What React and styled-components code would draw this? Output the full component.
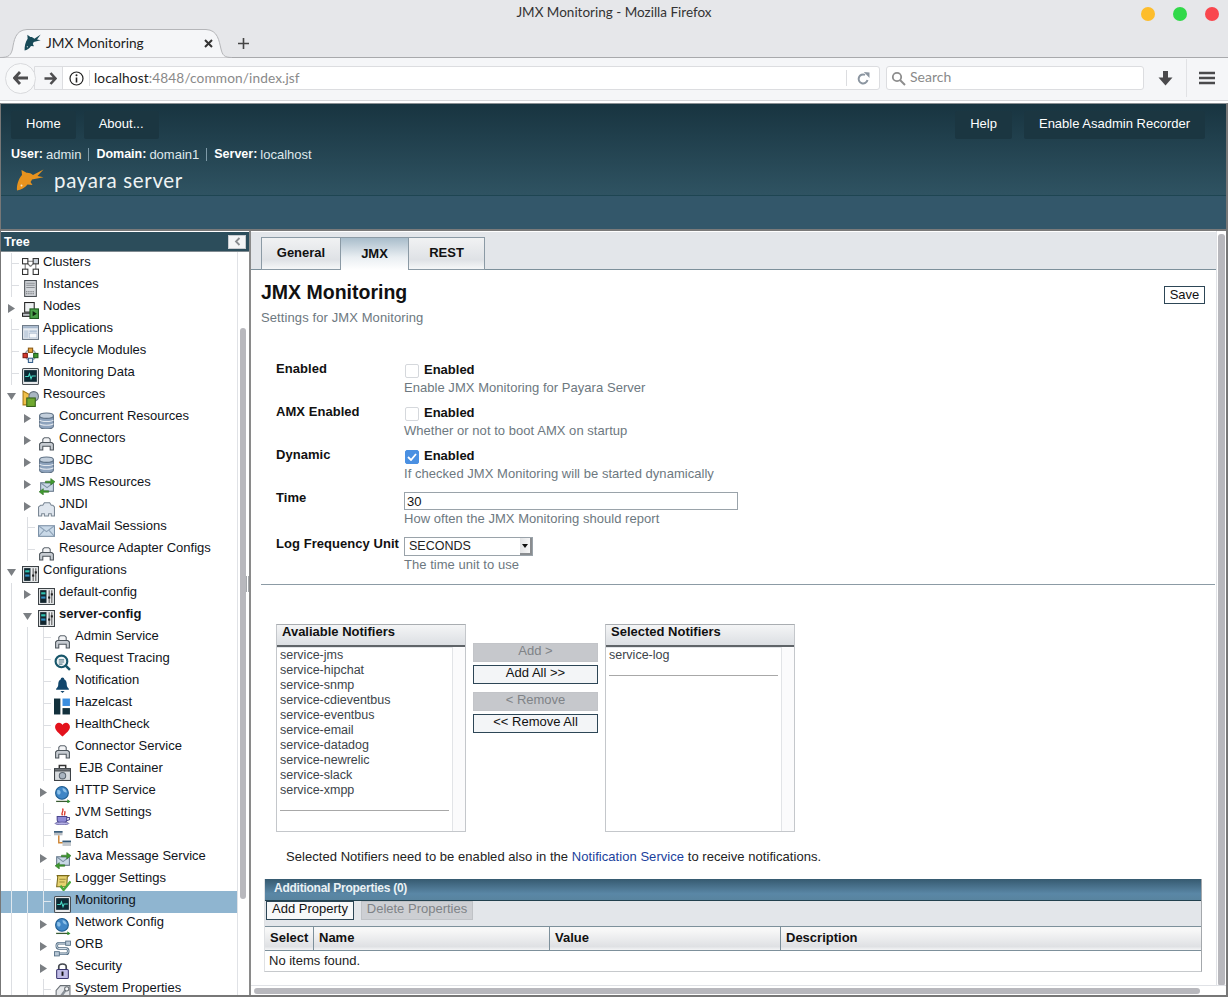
import styled, { createGlobalStyle } from 'styled-components';

const GlobalStyle = createGlobalStyle`
  html, body {
    margin: 0;
    padding: 0;
    background: #fff;
  }
  * {
    box-sizing: border-box;
  }
`;

const Page = styled.div`
  width: 1228px;
  height: 997px;
  overflow: hidden;
  display: flex;
  flex-direction: column;
  font-family: "Liberation Sans", Arial, sans-serif;
  font-size: 13px;
  color: #111;
`;

/* ---------- browser chrome ---------- */

const Browser = styled.div`
  height: 103px;
  flex: none;
  display: flex;
  flex-direction: column;
  font-family: Lato, "Noto Sans", sans-serif;
`;

const TitleBar = styled.div`
  height: 29px;
  flex: none;
  background: #e6e7ea;
  display: flex;
  align-items: center;
  justify-content: center;
  position: relative;
  padding-bottom: 5px;
  font-size: 13.5px;
  color: #333;
`;

const WindowDots = styled.div`
  position: absolute;
  right: 9px;
  top: 7px;
  display: flex;
  gap: 18px;
`;

const Dot = styled.span`
  width: 14px;
  height: 14px;
  border-radius: 50%;
  background: ${(p) => p.$color};
`;

const TabStrip = styled.div`
  height: 29px;
  flex: none;
  background: #e6e7ea;
  border-bottom: 1px solid #a8a9ac;
  display: flex;
  align-items: flex-start;
`;

const BrowserTab = styled.div`
  width: 232px;
  height: 29px;
  position: relative;
  display: flex;
  align-items: center;
  padding: 0 19px 3px 24px;
  font-size: 13.7px;
  color: #222;
`;

const TabOutline = styled.svg`
  position: absolute;
  left: 0;
  top: 0;
`;

const TabTitle = styled.span`
  position: relative;
  flex: 1;
  margin-left: 5px;
`;

const TabIcon = styled.span`
  position: relative;
  display: flex;
`;

const TabClose = styled.svg`
  position: relative;
  margin-top: 3px;
`;

const NewTab = styled.svg`
  margin: 8px 0 0 5px;
`;

const NavBar = styled.div`
  height: 43px;
  flex: none;
  background: #f5f6f8;
  border-bottom: 1px solid #d6d7da;
  display: flex;
  align-items: center;
  padding: 0 0 2px 5px;
  position: relative;
`;

const BackButton = styled.div`
  width: 31px;
  height: 31px;
  flex: none;
  border-radius: 50%;
  border: 1px solid #d9dadd;
  background: #f8f9fa;
  display: flex;
  align-items: center;
  justify-content: center;
  position: relative;
  z-index: 1;
`;

const UrlBar = styled.div`
  width: 846px;
  height: 24px;
  margin-left: -2px;
  flex: none;
  border: 1px solid #dcdde0;
  border-radius: 0 3px 3px 0;
  background: #fff;
  display: flex;
  align-items: center;
  font-size: 13.7px;
  color: #8a8a8a;
`;

const ForwardCell = styled.div`
  width: 28px;
  height: 22px;
  background: #f5f6f8;
  border-right: 1px solid #dcdde0;
  display: flex;
  align-items: center;
  justify-content: center;
  padding-left: 4px;
  flex: none;
`;

const InfoCell = styled.div`
  width: 27px;
  height: 16px;
  border-right: 1px solid #dcdde0;
  display: flex;
  align-items: center;
  justify-content: center;
  flex: none;
`;

const UrlText = styled.span`
  margin-left: 4px;
  flex: 1;
  letter-spacing: 0.1px;
  padding-bottom: 2px;
  b {
    font-weight: 400;
    color: #222;
  }
`;

const ReloadCell = styled.div`
  width: 33px;
  height: 16px;
  border-left: 1px solid #dcdde0;
  display: flex;
  align-items: center;
  justify-content: center;
  flex: none;
`;

const SearchBar = styled.div`
  width: 258px;
  height: 24px;
  margin-left: 6px;
  flex: none;
  border: 1px solid #dcdde0;
  border-radius: 3px;
  background: #fff;
  display: flex;
  align-items: center;
  gap: 4px;
  padding-left: 4px;
  font-size: 14px;
  color: #8a8a8a;
  span {
    padding-bottom: 3px;
  }
`;

const ToolCell = styled.div`
  width: ${(p) => p.$w}px;
  height: 38px;
  flex: none;
  display: flex;
  align-items: center;
  justify-content: center;
  border-left: ${(p) => (p.$divided ? '1px solid #e1e2e5' : 'none')};
`;

/* ---------- masthead ---------- */

const Masthead = styled.header`
  height: 128px;
  flex: none;
  border-top: 1px solid #8b9094;
  border-left: 1px solid #777;
  border-right: 2px solid #777;
  border-bottom: 2px solid #7a7a7a;
  background: linear-gradient(#183440 0, #2f5362 91px, #1e4552 91px, #1e4552 92px, #33576a 92px);
  display: flex;
  flex-direction: column;
  color: #fff;
`;

const MastButtons = styled.div`
  display: flex;
  padding: 7px 21px 0 10px;
  gap: 8px;
`;

const MastButton = styled.div`
  height: 28px;
  padding: 0 15px 3px;
  background: #1b3641;
  border-radius: 2px;
  display: flex;
  align-items: center;
  justify-content: center;
  font-size: 13px;
  color: #fff;
  margin-left: ${(p) => (p.$push ? 'auto' : '0')};
  margin-right: ${(p) => p.$after || 0}px;
`;

const UserLine = styled.div`
  display: flex;
  align-items: center;
  margin: 7px 0 0 10px;
  font-size: 13px;
  height: 16px;
  color: #dfe8ec;
  b {
    color: #fff;
    font-size: 12.5px;
    margin-right: 3px;
  }
`;

const UserSep = styled.span`
  width: 1px;
  height: 13px;
  background: #7e9aa8;
  margin: 0 7px;
`;

const Brand = styled.div`
  display: flex;
  align-items: center;
  margin: 5px 0 0 15px;
  height: 26px;
`;

const BrandName = styled.span`
  margin-left: 10px;
  font-family: Lato, "Noto Sans", sans-serif;
  font-size: 20.5px;
  letter-spacing: 0.65px;
  color: #eef3f4;
`;

/* ---------- work area ---------- */

const Work = styled.div`
  flex: 1;
  min-height: 0;
  display: flex;
  border-left: 1px solid #777;
  border-right: 2px solid #777;
  border-bottom: 2px solid #777;
`;

const TreePane = styled.aside`
  width: 250px;
  flex: none;
  display: flex;
  flex-direction: column;
  border-right: 2px solid #8a8a8a;
  position: relative;
`;

const TreeHead = styled.div`
  height: 20px;
  flex: none;
  margin-top: 1px;
  background: #2c4d5b;
  border-bottom: 1px solid #7f8a90;
  color: #fff;
  font-weight: 700;
  font-size: 12.5px;
  display: flex;
  align-items: center;
  justify-content: space-between;
  padding: 0 3px 0 3px;
`;

const CollapseButton = styled.div`
  width: 18px;
  height: 14px;
  background: #f4f5f6;
  border: 1px solid #c9ccd0;
  display: flex;
  align-items: center;
  justify-content: center;
`;

const TreeBody = styled.div`
  flex: 1;
  min-height: 0;
  display: flex;
  overflow: hidden;
`;

const TreeRows = styled.div`
  width: 237px;
  flex: none;
  padding-top: 1px;
  border-right: 1px solid #e0e2e6;
`;

const TreeScrollbar = styled.div`
  flex: 1;
  padding: 76px 2px 0 2px;
`;

const TreeThumb = styled.div`
  width: 6px;
  height: 571px;
  background: #b8b8bd;
  border-radius: 3px;
`;

const Row = styled.div`
  height: 22px;
  display: flex;
  padding-left: 2px;
  background: ${(p) => (p.$active ? '#8fb5d0' : 'transparent')};
  --rail: ${(p) => (p.$active ? '#dfe8ef' : '#dcdee2')};
`;

const Slot = styled.div`
  width: 16px;
  height: 22px;
  flex: none;
  position: relative;
  display: flex;
  align-items: center;
  justify-content: center;
  background-repeat: no-repeat;
  background-image: ${(p) =>
    p.$kind === 'rail'
      ? 'linear-gradient(var(--rail), var(--rail))'
      : p.$kind === 'branch'
        ? 'linear-gradient(var(--rail), var(--rail)), linear-gradient(var(--rail), var(--rail))'
        : 'none'};
  background-size: ${(p) => (p.$kind === 'branch' ? '1px 22px, 8px 1px' : '1px 22px')};
  background-position: ${(p) => (p.$kind === 'branch' ? '8px 0, 8px 10px' : '8px 0')};
`;

const IconCell = styled.div`
  width: ${(p) => (p.$wide ? 28 : 24)}px;
  flex: none;
  padding: 5px 0 0 3px;
`;

const RowLabel = styled.span`
  line-height: 18px;
  white-space: nowrap;
  font-size: 13px;
  font-weight: ${(p) => (p.$bold ? 700 : 400)};
  color: #10141a;
`;

const Splitter = styled.div`
  position: absolute;
  right: 0;
  top: 345px;
  width: 3px;
  height: 16px;
  border: 1px solid #a5a8ac;
  border-top: none;
  border-bottom: none;
`;

const Main = styled.main`
  flex: 1;
  min-width: 0;
  display: flex;
  flex-direction: column;
`;

const MainTop = styled.div`
  flex: 1;
  min-height: 0;
  display: flex;
`;

const Content = styled.div`
  flex: 1;
  min-width: 0;
  overflow: hidden;
  border-right: 1px solid #e0e2e6;
`;

const VScrollbar = styled.div`
  width: 9px;
  flex: none;
  padding: 3px 1px 0 1px;
`;

const Thumb = styled.div`
  width: 7px;
  height: 752px;
  background: #b8b8bd;
  border-radius: 3px;
`;

const HScrollbar = styled.div`
  height: 10px;
  flex: none;
  border-top: 1px solid #e0e2e6;
  padding: 2px 0 0 3px;
`;

const HThumb = styled.div`
  width: 946px;
  height: 6px;
  background: #b8b8bd;
  border-radius: 3px;
`;

const TabBar = styled.div`
  height: 38px;
  margin-top: 1px;
  padding: 5px 0 0 10px;
  background: #e3e6ea;
  border-bottom: 1px solid #7d909b;
  display: flex;
`;

const PageTab = styled.div`
  width: ${(p) => p.$w}px;
  height: 33px;
  border: 1px solid #8b9aa5;
  border-left-width: ${(p) => (p.$first ? 1 : 0)}px;
  border-bottom: ${(p) => (p.$active ? 'none' : '1px solid #8b9aa5')};
  background: ${(p) =>
    p.$active
      ? 'linear-gradient(#a9bdcb, #e9eef2 60%, #fff)'
      : 'linear-gradient(#f1f2f3, #dfe2e6 70%, #f6f7f8)'};
  display: flex;
  align-items: center;
  justify-content: center;
  font-weight: 700;
  font-size: 13px;
  padding-bottom: 2px;
  color: #111;
`;

const Heading = styled.div`
  padding: 9px 11px 0 10px;
  display: flex;
  justify-content: space-between;
  align-items: flex-start;
`;

const PageTitle = styled.h1`
  margin: 0;
  font-size: 19.5px;
  line-height: 26px;
  font-weight: 700;
  color: #111;
`;

const PageHelp = styled.p`
  margin: 5px 0 0;
  font-size: 13px;
  line-height: 16px;
  letter-spacing: 0.1px;
  color: #6d7880;
`;

const SaveButton = styled.div`
  width: 41px;
  height: 18px;
  margin-top: 7px;
  border: 1px solid #2d4656;
  background: #fff;
  font-size: 13px;
  padding-bottom: 1px;
  display: flex;
  align-items: center;
  justify-content: center;
`;

const Form = styled.div`
  margin: 35px 0 0 25px;
`;

const FormRow = styled.div`
  display: grid;
  grid-template-columns: 128px 1fr;
  height: ${(p) => p.$h || 43}px;
`;

const FieldLabel = styled.div`
  font-weight: 700;
  font-size: 13px;
  letter-spacing: 0.05px;
  line-height: 16px;
  white-space: nowrap;
`;

const FieldValue = styled.div`
  padding-top: ${(p) => p.$top || 0}px;
`;

const CheckLine = styled.div`
  display: flex;
  align-items: center;
  height: 16px;
  margin-bottom: 3px;
  font-weight: 700;
  font-size: 13px;
  padding-left: 1px;
`;

const Check = styled.span`
  width: 14px;
  height: 14px;
  flex: none;
  margin: 4px 5px 0 0;
  border-radius: 2px;
  border: 1px solid ${(p) => (p.$on ? '#4a90e2' : '#d5d8dc')};
  background: ${(p) => (p.$on ? '#4a90e2' : '#fff')};
  display: flex;
  align-items: center;
  justify-content: center;
`;

const Help = styled.div`
  font-size: 13px;
  line-height: 16px;
  letter-spacing: 0.04px;
  margin-top: 1px;
  color: #6d7880;
`;

const TextInput = styled.input`
  display: block;
  width: 334px;
  height: 18px;
  margin: 0;
  padding: 0 2px;
  border: 1px solid #9aa3aa;
  border-radius: 0;
  outline: none;
  font: 13px "Liberation Sans", Arial, sans-serif;
  color: #111;
`;

const SelectBox = styled.div`
  width: 129px;
  height: 19px;
  border: 1px solid #9aa3aa;
  display: flex;
  align-items: center;
  justify-content: space-between;
  font-size: 12.5px;
  padding-left: 4px;
  color: #222;
`;

const SelectValue = styled.span`
  padding-bottom: 2px;
`;

const SelectArrow = styled.span`
  width: 12px;
  height: 17px;
  background: linear-gradient(90deg, #e3e4e6, #f6f6f6);
  border-right: 2px solid #8a8d90;
  border-bottom: 2px solid #8a8d90;
  display: flex;
  align-items: center;
  justify-content: center;
`;

const Rule = styled.hr`
  border: none;
  height: 1px;
  background: #8c9ba5;
  margin: 4px 1px 0 10px;
`;

const Shuttle = styled.div`
  display: flex;
  align-items: flex-start;
  margin: 39px 0 0 25px;
`;

const ListBox = styled.div`
  width: 190px;
  height: 208px;
  flex: none;
  display: flex;
  flex-direction: column;
  border: 1px solid #c4c7cb;
  border-top-color: #a9adb1;
`;

const ListHead = styled.div`
  height: 22px;
  flex: none;
  padding-left: 5px;
  background: linear-gradient(#f4f5f6, #dcdfe3);
  border-bottom: 2px solid #5f6468;
  font-weight: 700;
  font-size: 13px;
  line-height: 13px;
`;

const ListBody = styled.div`
  flex: 1;
  display: flex;
  min-height: 0;
`;

const ListItems = styled.div`
  flex: 1;
  padding: 0 3px;
  border: 1px solid #e2e4e7;
  border-bottom: none;
  border-left: none;
  font-size: 12.5px;
  line-height: 15px;
  color: #3c444a;
`;

const ListEnd = styled.div`
  height: 1px;
  background: #a8a8a8;
  margin: ${(p) => p.$gap}px 0 0;
`;

const ListTrack = styled.div`
  width: 12px;
  flex: none;
  background: #fbfbfc;
`;

const ShuttleButtons = styled.div`
  width: 125px;
  margin: 19px 7px 0;
  flex: none;
`;

const MoveButton = styled.div`
  height: 19px;
  margin-top: ${(p) => p.$gap || 0}px;
  border: 1px solid ${(p) => (p.$off ? '#c2c4c8' : '#2d4656')};
  background: ${(p) => (p.$off ? '#c6c8cc' : '#f3f5f7')};
  color: ${(p) => (p.$off ? '#7f8387' : '#111')};
  font-size: 13px;
  padding-bottom: 4px;
  display: flex;
  align-items: center;
  justify-content: center;
`;

const Note = styled.div`
  margin: 17px 0 0 35px;
  line-height: 16px;
  font-size: 13px;
  letter-spacing: 0.05px;
  color: #222;
  a {
    color: #1a3f9c;
    text-decoration: none;
  }
`;

const PropsTable = styled.section`
  width: 938px;
  margin: 14px 0 0 13px;
  border-right: 1px solid #a4a8ac;
  border-bottom: 1px solid #c6c9cc;
  border-left: 1px solid #dfe1e4;
`;

const PropsTitle = styled.div`
  height: 22px;
  background: linear-gradient(#365a70, #5a87a6 70%, #58849f);
  border-bottom: 1px solid #22414f;
  color: #eaf1f5;
  font-weight: 700;
  font-size: 12px;
  line-height: 19px;
  letter-spacing: -0.25px;
  padding-left: 9px;
`;

const PropsBar = styled.div`
  height: 25px;
  background: #e3e6ea;
  display: flex;
  gap: 7px;
  padding-left: 1px;
`;

const BarButton = styled.div`
  width: ${(p) => p.$w}px;
  height: 19px;
  border: 1px solid ${(p) => (p.$off ? '#bfc2c6' : '#2d4656')};
  background: ${(p) => (p.$off ? '#cdcfd3' : '#f7f8f9')};
  color: ${(p) => (p.$off ? '#7f8387' : '#111')};
  font-size: 13px;
  padding-bottom: 5px;
  display: flex;
  align-items: center;
  justify-content: center;
`;

const HeadRow = styled.div`
  display: grid;
  grid-template-columns: 49px 236px 231px 1fr;
  height: 25px;
  border-top: 1px solid #7d909b;
  border-bottom: 1px solid #7d909b;
  background: linear-gradient(#f7f7f7 15%, #dfe1e4 85%, #f4f5f6);
`;

const HeadCell = styled.div`
  font-weight: 700;
  font-size: 13px;
  padding: 3px 0 0 5px;
  border-right: ${(p) => (p.$last ? 'none' : '1px solid #7d909b')};
`;

const EmptyRow = styled.div`
  height: 20px;
  padding-left: 4px;
  font-size: 13px;
  line-height: 20px;
  color: #222;
`;

/* ---------- drawings ---------- */

function Fish({ color, width = 28, height = 22, stretch }) {
  return (
    <svg
      width={width}
      height={height}
      viewBox="0 0 28 22"
      preserveAspectRatio={stretch ? 'none' : 'xMidYMid meet'}
    >
      <path
        fill={color}
        d="M1 21.5C0.5 16 2.5 10 6 6L5.5 1L10.5 3.8C13 3.6 15 4.5 17 6L27.5 0.5L21.5 7L27.5 8.2L16 10.5C15.5 11.5 15 12.5 14.5 13L16.5 16L11.5 15.5C9 18.5 5 21 1 21.5Z"
      />
      <circle cx="5.5" cy="16.5" r="1" fill="#fff" opacity="0.75" />
    </svg>
  );
}

const CONNECTOR = (
  <>
    <path fill="#f3f4f6" stroke="#5e666e" d="M4.5 8V5L6 3.5H10L11.5 5V8Z" />
    <path fill="#c7ccd2" stroke="#4d555c" d="M1.5 15V9.5L3 8H13L14.5 9.5V15H11.5V11.5H4.5V15Z" />
  </>
);

const GLOBE = (
  <>
    <circle cx="7.5" cy="6.5" r="6" fill="#3f86c6" stroke="#1f5d90" />
    <path d="M3 4C5 3 7 5 6 7S3 8 3 6ZM8 2C10 2 12 4 12 6C10 6 8 5 8 2Z" fill="#8cc0e8" />
    <path d="M2 14.5H14" stroke="#3a5a32" strokeWidth="1.2" />
    <path d="M12.5 12.5L15.5 14.5L12.5 16.5Z" fill="#2f8f2f" />
  </>
);

const CONFIG = (
  <>
    <rect x="0.5" y="0.5" width="15" height="15" fill="#eceef0" stroke="#3c4246" />
    <rect x="2" y="2" width="6" height="12" fill="#13262e" />
    <rect x="3" y="4" width="4" height="2" fill="#2fc2b0" />
    <rect x="3" y="8" width="4" height="2" fill="#2f8fc2" />
    <path d="M10.5 2V14M13 2V14" stroke="#555" />
    <rect x="9.5" y="8" width="2" height="2" fill="#222" />
    <rect x="12" y="5" width="2" height="2" fill="#222" />
  </>
);

const MONITOR = (
  <>
    <rect x="0.5" y="0.5" width="15" height="15" rx="1" fill="#e8eaec" stroke="#4a4f54" />
    <rect x="2" y="2" width="12" height="11" fill="#0d2a34" />
    <path d="M3 8H6L7 5.5L8.5 10L9.5 7.5H13" fill="none" stroke="#48d8c4" />
  </>
);

const DATABASE = (
  <>
    <path fill="#8ea3bd" stroke="#5f7286" d="M1.5 3.5V13.5C1.5 15 4 16 8 16S14.5 15 14.5 13.5V3.5Z" />
    <ellipse cx="8" cy="3.5" rx="6.5" ry="2.5" fill="#c3cfdc" stroke="#5f7286" />
    <path d="M1.5 7.5C3 9.5 13 9.5 14.5 7.5M1.5 11C3 13 13 13 14.5 11" fill="none" stroke="#e3e8ee" />
  </>
);

const JMS = (
  <>
    <rect x="2.5" y="4.5" width="12" height="8" fill="#c9d8e6" stroke="#66788a" />
    <path d="M2.5 4.5L8.5 9L14.5 4.5" fill="none" stroke="#7f92a5" />
    <path d="M7 3H12V0.5L16 3.5L12 6.5V4.5H7Z" fill="#3f9a2f" stroke="#2a6b20" strokeWidth="0.5" />
    <path d="M10 12H5V10L1 13L5 16V13.5H10Z" fill="#3f9a2f" stroke="#2a6b20" strokeWidth="0.5" />
  </>
);

const ORB_PATH = 'M12 3H4.5C2 3 2 8 4.5 8H11.5C14 8 14 13 11.5 13H4';

const icons = {
  clusters: (
    <>
      <path d="M3 3H13M3 3V13M13 3V13M3 3L8 8M13 3L8 8" fill="none" stroke="#777" />
      <rect x="0.5" y="0.5" width="5" height="5" fill="#fff" stroke="#333" />
      <rect x="10.5" y="0.5" width="5" height="5" fill="#cfd6de" stroke="#333" />
      <rect x="0.5" y="10.5" width="5" height="5" fill="#fff" stroke="#333" />
      <rect x="10.5" y="10.5" width="5" height="5" fill="#fff" stroke="#333" />
    </>
  ),
  server: (
    <>
      <rect x="2.5" y="0.5" width="11" height="15" fill="#d3d6da" stroke="#4a4f54" />
      <path d="M4 3H12M4 5H12M4 7H12" stroke="#8a8f94" />
      <path d="M4 11H12M4 13H12" stroke="#55595e" strokeDasharray="1 1" />
    </>
  ),
  nodes: (
    <>
      <rect x="2.5" y="0.5" width="9" height="9" fill="#eef0f2" stroke="#222" />
      <rect x="0.5" y="10.5" width="8" height="3" fill="#bfc3c8" stroke="#222" />
      <rect x="7.5" y="6.5" width="8" height="9" fill="#4aa14a" stroke="#1d5a1d" />
      <path d="M10 8.5L14 11L10 13.5Z" fill="#0d260d" />
    </>
  ),
  apps: (
    <>
      <rect x="0.5" y="1.5" width="15" height="13" fill="#e6ebf1" stroke="#6a7684" />
      <rect x="1" y="2" width="14" height="2" fill="#a7b8cc" />
      <rect x="2" y="6" width="4" height="7" fill="#c4d0de" />
      <rect x="7" y="6" width="7" height="2" fill="#b4c4d6" />
      <rect x="7" y="9" width="7" height="4" fill="#f7f9fb" stroke="#a7b8cc" strokeWidth="0.5" />
    </>
  ),
  lifecycle: (
    <>
      <circle cx="8" cy="8.5" r="5" fill="none" stroke="#9aa7b4" strokeWidth="1.4" />
      <rect x="6" y="2" width="4" height="4" fill="#e8a33a" stroke="#8a5a14" />
      <rect x="1" y="7" width="4" height="4" fill="#d83a2e" stroke="#7c1a14" />
      <rect x="11" y="7" width="4" height="4" fill="#3f9a2f" stroke="#1d5a1d" />
      <rect x="6" y="11.5" width="4" height="4" fill="#dfe8f2" stroke="#35608c" />
    </>
  ),
  monitor: MONITOR,
  resources: (
    <>
      <path d="M1 1L10 6V14H1Z" fill="#f0c04a" stroke="#a87a14" />
      <circle cx="11" cy="6" r="4.5" fill="#a9b6c2" stroke="#66727e" />
      <rect x="4.5" y="7.5" width="8" height="8" fill="#6fa82f" stroke="#35601a" />
    </>
  ),
  db: DATABASE,
  connector: CONNECTOR,
  jms: JMS,
  jndi: (
    <path
      fill="#dfe6ee"
      stroke="#7a8794"
      d="M0.5 15V6.5L2.5 5H4.5L6 2.5H11L12.5 5H14L15.5 6.5V15H12.5V13H10V15H6V13H3.5V15Z"
    />
  ),
  mail: (
    <>
      <rect x="0.5" y="3.5" width="15" height="10" fill="#c9d9e8" stroke="#7b90a6" />
      <path d="M0.5 3.5L8 9L15.5 3.5M0.5 13.5L6 7.5M15.5 13.5L10 7.5" fill="none" stroke="#8da1b6" />
    </>
  ),
  config: CONFIG,
  search: (
    <>
      <circle cx="7" cy="7" r="5.5" fill="#eef3f5" stroke="#17566a" strokeWidth="2" />
      <path d="M11 11L15 15" stroke="#17566a" strokeWidth="2.4" />
      <path d="M4.5 5.5H9.5M4.5 7.5H9.5M4.5 9.5H8" stroke="#5a7f8c" />
    </>
  ),
  bell: (
    <path
      fill="#12466c"
      d="M8 1.5C9 1.5 9.6 2.2 9.6 3C11.6 3.8 12 6 12 8C12 10 13 11 14 12V13H2V12C3 11 4 10 4 8C4 6 4.4 3.8 6.4 3C6.4 2.2 7 1.5 8 1.5ZM6 14H10L8 16Z"
    />
  ),
  hazelcast: (
    <>
      <rect x="0" y="0.5" width="6" height="15" fill="#12303c" />
      <rect x="8" y="0.5" width="7" height="7" fill="#3a8ee0" />
      <rect x="8" y="9.5" width="7" height="6" fill="#12303c" />
    </>
  ),
  heart: (
    <path
      fill="#e3121c"
      d="M8 15.5C5 12.5 1 10 1 6.5C1 4 2.8 2.5 4.7 2.5C6.2 2.5 7.4 3.4 8 4.6C8.6 3.4 9.8 2.5 11.3 2.5C13.2 2.5 15 4 15 6.5C15 10 11 12.5 8 15.5Z"
    />
  ),
  ejb: (
    <>
      <path d="M5 4V1.5H11V4" fill="none" stroke="#333" strokeWidth="1.4" />
      <rect x="0.5" y="4.5" width="15" height="11" fill="#d9dcdf" stroke="#3d4246" />
      <rect x="0.5" y="4.5" width="15" height="2" fill="#85898e" stroke="#3d4246" />
      <circle cx="8" cy="11" r="3" fill="#a9b4c0" stroke="#5c6670" />
    </>
  ),
  globe: GLOBE,
  java: (
    <>
      <path d="M8 0.5C10 3 6 4 8 7M10 3C11 4.5 9.5 5.5 10 7" fill="none" stroke="#d83a2e" strokeWidth="1.3" />
      <path d="M3 8H12V11C12 13 10 14 7.5 14S3 13 3 11Z" fill="#8f8ad6" stroke="#4a458c" />
      <path d="M12 9H14.5V11L12 12" fill="none" stroke="#4a458c" />
      <ellipse cx="7.5" cy="14.5" rx="6.5" ry="1.3" fill="#b5b1e6" stroke="#4a458c" strokeWidth="0.6" />
    </>
  ),
  batch: (
    <>
      <path d="M4.5 5V12H9" fill="none" stroke="#d08838" strokeWidth="1.4" />
      <rect x="0" y="1" width="8" height="4" fill="#b7bcc2" />
      <rect x="0" y="1" width="8" height="1.5" fill="#355a78" />
      <rect x="8" y="10" width="8" height="5" fill="#c2c7cc" />
      <rect x="8" y="10" width="8" height="1.5" fill="#355a78" />
    </>
  ),
  logger: (
    <>
      <path d="M3 1.5H14L12.5 3L12 12H2.5L3.5 3Z" fill="#e6d270" stroke="#7a6a1a" />
      <path d="M5 5H11M5 7.5H10" stroke="#9a8a34" />
      <path d="M6 11L9 15L15.5 7" fill="none" stroke="#4aa83a" strokeWidth="2.2" />
    </>
  ),
  orb: (
    <>
      <path d={ORB_PATH} fill="none" stroke="#4f6a80" strokeWidth="2.4" />
      <path d={ORB_PATH} fill="none" stroke="#dce6ef" strokeWidth="0.9" />
      <rect x="11" y="1" width="4.5" height="4" fill="#b9c8d6" stroke="#4f6a80" strokeWidth="0.8" />
      <rect x="0.5" y="11" width="4.5" height="4" fill="#b9c8d6" stroke="#4f6a80" strokeWidth="0.8" />
    </>
  ),
  lock: (
    <>
      <path d="M4.5 7V4.5C4.5 1 11.5 1 11.5 4.5V7" fill="none" stroke="#454a50" strokeWidth="1.6" />
      <rect x="2.5" y="7" width="11" height="8.5" rx="1" fill="#c0bce6" stroke="#3a3670" />
      <path d="M8 9V13" stroke="#111" strokeWidth="1.8" />
    </>
  ),
  sysprops: (
    <>
      <path d="M6 1.5H15V15.5H2V6Z" fill="#e4e6e9" stroke="#6a7076" />
      <path d="M12.5 3.5L7 11L4.5 13.5" fill="none" stroke="#8a9098" strokeWidth="2.4" />
      <circle cx="12" cy="4.5" r="2" fill="#f4f5f6" stroke="#6a7076" />
    </>
  ),
};

const TreeSvg = styled.svg`
  display: block;
`;

function TreeIcon({ name }) {
  return (
    <TreeSvg width="17" height="17" viewBox="0 0 16 16">
      {icons[name]}
    </TreeSvg>
  );
}

function Toggle({ open }) {
  return (
    <svg width="9" height="9" viewBox="0 0 9 9">
      <path fill="#7b7f83" d={open ? 'M0 1H9L4.5 8Z' : 'M1 0L8 4.5L1 9Z'} />
    </svg>
  );
}

/* kind per slot: '' blank, r rail, b branch, > collapsed, v expanded */
const treeRows = [
  { slots: ['b'], icon: 'clusters', label: 'Clusters' },
  { slots: ['b'], icon: 'server', label: 'Instances' },
  { slots: ['>'], icon: 'nodes', label: 'Nodes' },
  { slots: ['b'], icon: 'apps', label: 'Applications' },
  { slots: ['b'], icon: 'lifecycle', label: 'Lifecycle Modules' },
  { slots: ['b'], icon: 'monitor', label: 'Monitoring Data' },
  { slots: ['v'], icon: 'resources', label: 'Resources' },
  { slots: ['', '>'], icon: 'db', label: 'Concurrent Resources' },
  { slots: ['', '>'], icon: 'connector', label: 'Connectors' },
  { slots: ['', '>'], icon: 'db', label: 'JDBC' },
  { slots: ['', '>'], icon: 'jms', label: 'JMS Resources' },
  { slots: ['', '>'], icon: 'jndi', label: 'JNDI' },
  { slots: ['', 'b'], icon: 'mail', label: 'JavaMail Sessions' },
  { slots: ['', 'b'], icon: 'connector', label: 'Resource Adapter Configs' },
  { slots: ['v'], icon: 'config', label: 'Configurations' },
  { slots: ['r', '>'], icon: 'config', label: 'default-config' },
  { slots: ['r', 'v'], icon: 'config', label: 'server-config', bold: true },
  { slots: ['r', 'r', 'b'], icon: 'connector', label: 'Admin Service' },
  { slots: ['r', 'r', 'b'], icon: 'search', label: 'Request Tracing' },
  { slots: ['r', 'r', 'b'], icon: 'bell', label: 'Notification' },
  { slots: ['r', 'r', 'b'], icon: 'hazelcast', label: 'Hazelcast' },
  { slots: ['r', 'r', 'b'], icon: 'heart', label: 'HealthCheck' },
  { slots: ['r', 'r', 'b'], icon: 'connector', label: 'Connector Service' },
  { slots: ['r', 'r', 'b'], icon: 'ejb', label: 'EJB Container', wide: true },
  { slots: ['r', 'r', '>'], icon: 'globe', label: 'HTTP Service' },
  { slots: ['r', 'r', 'b'], icon: 'java', label: 'JVM Settings' },
  { slots: ['r', 'r', 'b'], icon: 'batch', label: 'Batch' },
  { slots: ['r', 'r', '>'], icon: 'jms', label: 'Java Message Service' },
  { slots: ['r', 'r', 'b'], icon: 'logger', label: 'Logger Settings' },
  { slots: ['r', 'r', 'b'], icon: 'monitor', label: 'Monitoring', active: true },
  { slots: ['r', 'r', '>'], icon: 'globe', label: 'Network Config' },
  { slots: ['r', 'r', '>'], icon: 'orb', label: 'ORB' },
  { slots: ['r', 'r', '>'], icon: 'lock', label: 'Security' },
  { slots: ['r', 'r', 'b'], icon: 'sysprops', label: 'System Properties' },
];

const slotKinds = { r: 'rail', b: 'branch' };

function TreeRow({ row }) {
  return (
    <Row $active={row.active}>
      {row.slots.map((s, i) => (
        <Slot key={i} $kind={slotKinds[s]}>
          {s === '>' && <Toggle />}
          {s === 'v' && <Toggle open />}
        </Slot>
      ))}
      <IconCell $wide={row.wide}>
        <TreeIcon name={row.icon} />
      </IconCell>
      <RowLabel $bold={row.bold}>{row.label}</RowLabel>
    </Row>
  );
}

const available = [
  'service-jms',
  'service-hipchat',
  'service-snmp',
  'service-cdieventbus',
  'service-eventbus',
  'service-email',
  'service-datadog',
  'service-newrelic',
  'service-slack',
  'service-xmpp',
];

export default function App() {
  return (
    <Page>
      <GlobalStyle />
      <Browser>
        <TitleBar>
          JMX Monitoring - Mozilla Firefox
          <WindowDots>
            <Dot $color="#fdbd2c" />
            <Dot $color="#32d94a" />
            <Dot $color="#f9474e" />
          </WindowDots>
        </TitleBar>
        <TabStrip>
          <BrowserTab>
            <TabOutline width="232" height="29" viewBox="0 0 232 29">
              <path
                d="M0 28.5C9 28.5 11 26 12.5 20C14 12 15 1 27 0.5H206C218 1 219 12 221 20C222.5 26 224 28.5 232 28.5"
                fill="#f5f6f8"
                stroke="#b5b6b9"
              />
            </TabOutline>
            <TabIcon>
              <Fish color="#174a58" width="17" height="17" stretch />
            </TabIcon>
            <TabTitle>JMX Monitoring</TabTitle>
            <TabClose width="9" height="9" viewBox="0 0 9 9">
              <path d="M1 1L8 8M8 1L1 8" stroke="#333" strokeWidth="2" />
            </TabClose>
          </BrowserTab>
          <NewTab width="13" height="13" viewBox="0 0 13 13">
            <path d="M6.5 1V12M1 6.5H12" stroke="#444" strokeWidth="1.6" />
          </NewTab>
        </TabStrip>
        <NavBar>
          <BackButton>
            <svg width="16" height="14" viewBox="0 0 16 14">
              <path d="M7 1L1.5 7L7 13M2 7H15" fill="none" stroke="#4d4d4f" strokeWidth="2.8" />
            </svg>
          </BackButton>
          <UrlBar>
            <ForwardCell>
              <svg width="13" height="13" viewBox="0 0 13 13">
                <path d="M6.5 1L11.5 6.5L6.5 12M11 6.5H0.5" fill="none" stroke="#4d4d4f" strokeWidth="2.6" />
              </svg>
            </ForwardCell>
            <InfoCell>
              <svg width="15" height="15" viewBox="0 0 15 15">
                <circle cx="7.5" cy="7.5" r="6.5" fill="none" stroke="#222" strokeWidth="1.2" />
                <path d="M7.5 6.5V11.5" stroke="#222" strokeWidth="1.6" />
                <circle cx="7.5" cy="4.2" r="1" fill="#222" />
              </svg>
            </InfoCell>
            <UrlText>
              <b>localhost</b>:4848/common/index.jsf
            </UrlText>
            <ReloadCell>
              <svg width="13" height="13" viewBox="0 0 13 13">
                <path d="M10.5 8A4.5 4.5 0 1 1 8 2.8" fill="none" stroke="#8b95a0" strokeWidth="2" />
                <path d="M6.8 0L12.5 0.5V6Z" fill="#8b95a0" />
              </svg>
            </ReloadCell>
          </UrlBar>
          <SearchBar>
            <svg width="15" height="15" viewBox="0 0 15 15">
              <circle cx="6" cy="6" r="4.2" fill="none" stroke="#8d8d8d" strokeWidth="1.8" />
              <path d="M9 9L14 14" stroke="#8d8d8d" strokeWidth="2" />
            </svg>
            <span>Search</span>
          </SearchBar>
          <ToolCell $w="42">
            <svg width="15" height="15" viewBox="0 0 15 15">
              <path d="M5 0H10V6.5H14.5L7.5 14.5L0.5 6.5H5Z" fill="#4a4a4c" />
            </svg>
          </ToolCell>
          <ToolCell $w="41" $divided>
            <svg width="16" height="14" viewBox="0 0 16 14">
              <path d="M0 2H16M0 7H16M0 12H16" stroke="#4a4a4c" strokeWidth="2.4" />
            </svg>
          </ToolCell>
        </NavBar>
      </Browser>

      <Masthead>
        <MastButtons>
          <MastButton>Home</MastButton>
          <MastButton>About...</MastButton>
          <MastButton $push $after="4">
            Help
          </MastButton>
          <MastButton>Enable Asadmin Recorder</MastButton>
        </MastButtons>
        <UserLine>
          <b>User:</b> admin
          <UserSep />
          <b>Domain:</b> domain1
          <UserSep />
          <b>Server:</b> localhost
        </UserLine>
        <Brand>
          <Fish color="#e8931e" />
          <BrandName>payara server</BrandName>
        </Brand>
      </Masthead>

      <Work>
        <TreePane>
          <TreeHead>
            Tree
            <CollapseButton>
              <svg width="7" height="9" viewBox="0 0 7 9">
                <path d="M5.5 1L2 4.5L5.5 8" fill="none" stroke="#8a8d90" strokeWidth="1.8" />
              </svg>
            </CollapseButton>
          </TreeHead>
          <TreeBody>
            <TreeRows>
              {treeRows.map((row) => (
                <TreeRow key={row.label} row={row} />
              ))}
            </TreeRows>
            <TreeScrollbar>
              <TreeThumb />
            </TreeScrollbar>
          </TreeBody>
          <Splitter />
        </TreePane>

        <Main>
          <MainTop>
            <Content>
              <TabBar>
                <PageTab $w="80" $first>
                  General
                </PageTab>
                <PageTab $w="68" $active>
                  JMX
                </PageTab>
                <PageTab $w="76">REST</PageTab>
              </TabBar>

              <Heading>
                <div>
                  <PageTitle>JMX Monitoring</PageTitle>
                  <PageHelp>Settings for JMX Monitoring</PageHelp>
                </div>
                <SaveButton>Save</SaveButton>
              </Heading>

              <Form>
                <FormRow>
                  <FieldLabel>Enabled</FieldLabel>
                  <FieldValue>
                    <CheckLine>
                      <Check />
                      Enabled
                    </CheckLine>
                    <Help>Enable JMX Monitoring for Payara Server</Help>
                  </FieldValue>
                </FormRow>
                <FormRow>
                  <FieldLabel>AMX Enabled</FieldLabel>
                  <FieldValue>
                    <CheckLine>
                      <Check />
                      Enabled
                    </CheckLine>
                    <Help>Whether or not to boot AMX on startup</Help>
                  </FieldValue>
                </FormRow>
                <FormRow>
                  <FieldLabel>Dynamic</FieldLabel>
                  <FieldValue>
                    <CheckLine>
                      <Check $on>
                        <svg width="10" height="8" viewBox="0 0 10 8">
                          <path d="M1 4L4 7L9 1" fill="none" stroke="#fff" strokeWidth="1.8" />
                        </svg>
                      </Check>
                      Enabled
                    </CheckLine>
                    <Help>If checked JMX Monitoring will be started dynamically</Help>
                  </FieldValue>
                </FormRow>
                <FormRow $h="46">
                  <FieldLabel>Time</FieldLabel>
                  <FieldValue $top="2">
                    <TextInput defaultValue="30" />
                    <Help>How often the JMX Monitoring should report</Help>
                  </FieldValue>
                </FormRow>
                <FormRow $h="44">
                  <FieldLabel>Log Frequency Unit</FieldLabel>
                  <FieldValue $top="1">
                    <SelectBox>
                      <SelectValue>SECONDS</SelectValue>
                      <SelectArrow>
                        <svg width="6" height="4" viewBox="0 0 6 4">
                          <path d="M0 0H6L3 4Z" fill="#111" />
                        </svg>
                      </SelectArrow>
                    </SelectBox>
                    <Help>The time unit to use</Help>
                  </FieldValue>
                </FormRow>
              </Form>
              <Rule />

              <Shuttle>
                <ListBox>
                  <ListHead>Avaliable Notifiers</ListHead>
                  <ListBody>
                    <ListItems>
                      {available.map((name) => (
                        <div key={name}>{name}</div>
                      ))}
                      <ListEnd $gap="12" />
                    </ListItems>
                    <ListTrack />
                  </ListBody>
                </ListBox>
                <ShuttleButtons>
                  <MoveButton $off>Add &gt;</MoveButton>
                  <MoveButton $gap="3">Add All &gt;&gt;</MoveButton>
                  <MoveButton $gap="8" $off>
                    &lt; Remove
                  </MoveButton>
                  <MoveButton $gap="3">&lt;&lt; Remove All</MoveButton>
                </ShuttleButtons>
                <ListBox>
                  <ListHead>Selected Notifiers</ListHead>
                  <ListBody>
                    <ListItems>
                      <div>service-log</div>
                      <ListEnd $gap="12" />
                    </ListItems>
                    <ListTrack />
                  </ListBody>
                </ListBox>
              </Shuttle>

              <Note>
                Selected Notifiers need to be enabled also in the <a href="#n">Notification Service</a> to
                receive notifications.
              </Note>

              <PropsTable>
                <PropsTitle>Additional Properties (0)</PropsTitle>
                <PropsBar>
                  <BarButton $w="88">Add Property</BarButton>
                  <BarButton $w="112" $off>
                    Delete Properties
                  </BarButton>
                </PropsBar>
                <HeadRow>
                  <HeadCell>Select</HeadCell>
                  <HeadCell>Name</HeadCell>
                  <HeadCell>Value</HeadCell>
                  <HeadCell $last>Description</HeadCell>
                </HeadRow>
                <EmptyRow>No items found.</EmptyRow>
              </PropsTable>
            </Content>
            <VScrollbar>
              <Thumb />
            </VScrollbar>
          </MainTop>
          <HScrollbar>
            <HThumb />
          </HScrollbar>
        </Main>
      </Work>
    </Page>
  );
}
